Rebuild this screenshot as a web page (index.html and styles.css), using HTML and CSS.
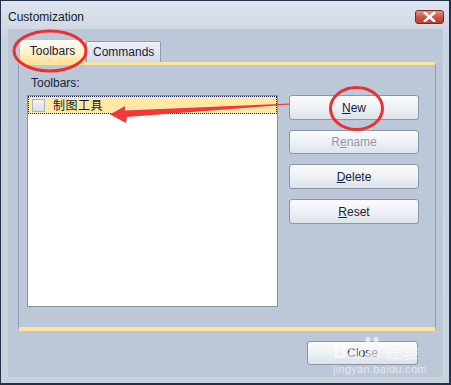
FILE: index.html
```html
<!DOCTYPE html>
<html>

<head>
    <link rel="stylesheet" href="styles.css">
</head>

<body>
    <div class="window">
        <div class="titlebar">
            <span class="title">Customization</span>
            <div class="close-x">
                <svg width="13" height="10" viewBox="0 0 13 10">
                    <path d="M2 1 L11 9 M11 1 L2 9" stroke="#fff" stroke-width="2.6" stroke-linecap="square"/>
                </svg>
            </div>
        </div>
        <div class="client">
            <div class="tabs">
                <div class="tab active">Toolbars</div>
                <div class="tab">Commands</div>
            </div>
            <div class="panel">
                <div class="label">Toolbars:</div>
                <div class="row">
                    <div class="listbox">
                        <div class="item">
                            <span class="check"></span>
                            <span class="item-text">制图工具</span>
                        </div>
                    </div>
                    <div class="buttons">
                        <button class="btn"><u>N</u>ew</button>
                        <button class="btn disabled">R<u>e</u>name</button>
                        <button class="btn"><u>D</u>elete</button>
                        <button class="btn"><u>R</u>eset</button>
                    </div>
                </div>
            </div>
            <div class="footer">
                <button class="btn close-btn">Close</button>
            </div>
        </div>

        <!-- annotations drawn over the dialog -->
        <svg class="marks" width="451" height="385" viewBox="0 0 451 385">
            <ellipse cx="50" cy="51" rx="36" ry="20" fill="none" stroke="#ec2f2f" stroke-width="3"/>
            <ellipse cx="356.5" cy="108.5" rx="26" ry="21" fill="none" stroke="#ec2f2f" stroke-width="3"/>
            <polygon points="110,114.5 125,106 125,110.5 290,103.4 290,104.6 127,117 126,123" fill="#f03a3a"/>
        </svg>

        <div class="watermark">
            <div class="wm-top">
                <span class="wm-bai">Bai</span>
                <svg class="wm-paw" width="22" height="24" viewBox="0 0 22 24">
                    <ellipse cx="6" cy="4" rx="2.6" ry="3.2" fill="#fff"/>
                    <ellipse cx="14" cy="4" rx="2.6" ry="3.2" fill="#fff"/>
                    <ellipse cx="2.5" cy="11" rx="2.3" ry="3" fill="#fff"/>
                    <ellipse cx="18.5" cy="11" rx="2.3" ry="3" fill="#fff"/>
                    <path d="M4 21 C4 15 8 12 10.5 12 C13 12 17 15 17 21 Z" fill="#fff"/>
                </svg>
                <span class="wm-jy">经验</span>
            </div>
            <div class="wm-url">jingyan.baidu.com</div>
        </div>
    </div>
</body>

</html>
```

FILE: styles.css
```css
body {
    margin: 0;
    font-family: 'Liberation Sans', Arial, 'Noto Sans CJK SC', sans-serif;
    font-size: 12px;
    color: #15213a;
}

.window {
    position: relative;
    width: 451px;
    height: 385px;
    box-sizing: border-box;
    border: 1px solid #24314a;
    border-right-width: 2px;
    border-bottom-width: 2px;
    background: linear-gradient(#dfe5ee, #cbd3df 40px, #cad2de);
    overflow: hidden;
}

.titlebar {
    height: 28px;
    box-sizing: border-box;
    display: flex;
    align-items: center;
    justify-content: space-between;
    padding: 4px 5px 0 7px;
}

.title {
    font-size: 12px;
    color: #111a2c;
}

.close-x {
    width: 27px;
    height: 12px;
    border: 1px solid #7d2a22;
    border-radius: 3px;
    background: linear-gradient(#e49585, #c95645 50%, #b8402f);
    display: flex;
    align-items: center;
    justify-content: center;
}

.client {
    margin: 0 6px 0 7px;
    height: 348px;
    background: #bcc7d8;
    padding: 10px 7px 0 10px;
    box-sizing: border-box;
    box-shadow: 1px 0 0 #d4dbe6;
}

.tabs {
    display: flex;
    align-items: flex-end;
    height: 23px;
    padding-left: 1px;
}

.tab {
    height: 21px;
    padding: 0 6px;
    display: flex;
    align-items: center;
    box-sizing: border-box;
    border: 1px solid #8d9bb2;
    border-bottom: none;
    border-radius: 2px 2px 0 0;
    background: linear-gradient(#eef1f6, #d3dbe7);
    font-size: 12px;
}

.tab.active {
    height: 23px;
    width: 67px;
    justify-content: center;
    background: linear-gradient(#fdfcf8, #fff1c8 60%, #ffe39a);
    border-color: #b9c2d2;
}

.panel {
    height: 269px;
    box-sizing: border-box;
    border: 1px solid #8f9cb3;
    border-top: 3px solid #ffe39b;
    border-bottom: 4px solid #ffe39b;
    border-radius: 0 0 3px 3px;
    padding: 11px 16px 0 8px;
}

.label {
    line-height: 14px;
    margin-bottom: 5px;
    padding-left: 4px;
}

.row {
    display: flex;
    gap: 11px;
}

.listbox {
    width: 251px;
    height: 212px;
    box-sizing: border-box;
    background: #fff;
    border: 1px solid #8793a8;
}

.item {
    height: 18px;
    box-sizing: border-box;
    border: 1px dotted #14205a;
    background: #ffe8a6;
    display: flex;
    align-items: center;
    padding-left: 3px;
}

.check {
    width: 11px;
    height: 11px;
    border: 1px solid #a8b1c0;
    background: linear-gradient(#f2f4f7, #d7dce4);
    margin-right: 8px;
}

.item-text {
    font-family: 'Noto Sans CJK SC', sans-serif;
    font-size: 12px;
    line-height: 14px;
    letter-spacing: 0.5px;
    color: #111c33;
}

.buttons {
    display: flex;
    flex-direction: column;
    gap: 10px;
}

.btn {
    width: 130px;
    height: 25px;
    padding: 0;
    border: 1px solid #8a97ab;
    border-radius: 3px;
    background: linear-gradient(#fbfcfd, #eef1f5 50%, #dde2ea);
    font-family: 'Liberation Sans', Arial, sans-serif;
    font-size: 12px;
    color: #15213a;
}

.btn.disabled {
    color: #8f99a8;
    height: 24px;
}

.footer {
    display: flex;
    justify-content: flex-end;
    padding: 10px 18px 0 0;
}

.close-btn {
    width: 111px;
    height: 24px;
}

.marks {
    position: absolute;
    left: -1px;
    top: -1px;
    pointer-events: none;
}

.watermark {
    position: absolute;
    left: 332px;
    top: 331px;
    color: #fff;
    opacity: 0.6;
    pointer-events: none;
}

.wm-top {
    display: flex;
    align-items: flex-end;
    height: 30px;
}

.wm-bai {
    font-size: 20px;
    font-weight: bold;
    line-height: 22px;
    margin-right: -2px;
}

.wm-paw {
    margin-bottom: 2px;
}

.wm-jy {
    font-family: 'Noto Sans CJK SC', sans-serif;
    font-size: 17px;
    line-height: 22px;
    margin-left: 1px;
}

.wm-url {
    font-size: 11px;
    line-height: 12px;
    margin-top: 1px;
    letter-spacing: 0.3px;
}
```
